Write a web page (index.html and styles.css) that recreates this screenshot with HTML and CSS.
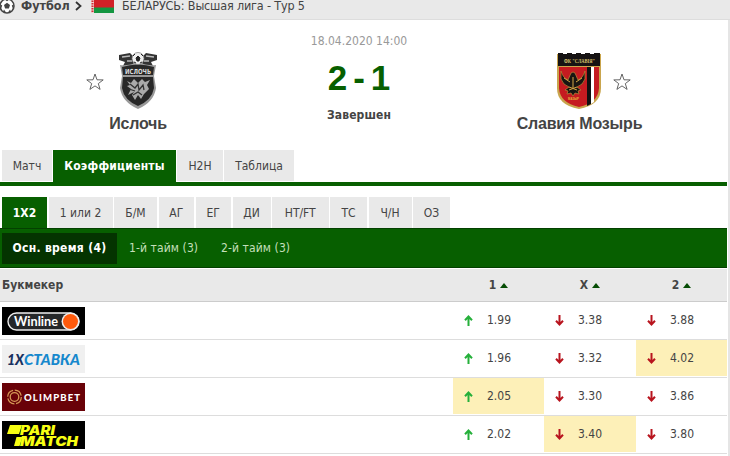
FILE: index.html
```
<!DOCTYPE html>
<html lang="ru">
<head>
<meta charset="utf-8">
<title>Ислочь - Славия Мозырь</title>
<link rel="stylesheet" href="styles.css">
</head>
<body>
<svg width="0" height="0" class="defs" aria-hidden="true">
  <symbol id="up" viewBox="0 0 9 11"><path d="M4.5 11V2M1 5.2 4.5 1.5 8 5.2" fill="none" stroke="#25b03a" stroke-width="2"/></symbol>
  <symbol id="down" viewBox="0 0 9 11"><path d="M4.5 0V9M1 5.8 4.5 9.5 8 5.8" fill="none" stroke="#b8141e" stroke-width="2"/></symbol>
  <symbol id="star" viewBox="0 0 18 17"><path d="M9 1 11 6.8 17.2 6.9 12.3 10.6 14.1 16.4 9 12.9 3.9 16.4 5.7 10.6.8 6.9 7 6.8Z" fill="#fff" stroke="#555" stroke-width=".9"/></symbol>
</svg>
<div class="page">
  <header class="crumbs">
    <svg class="ball" width="16" height="16" viewBox="0 0 16 16"><circle cx="8" cy="8" r="7" fill="#fff" stroke="#444" stroke-width="1.5"/><path d="M8 4.8 11 7 9.9 10.5H6.1L5 7ZM5.5 1.5h5L8 3.2ZM1 6l2.2 1.6L2 11ZM15 6l-2.2 1.6L14 11ZM4 13.8l1-2.3 2 2.9ZM12 13.8l-1-2.3-2 2.9Z" fill="#444"/></svg>
    <b class="sport">Футбол</b>
    <svg class="chev" width="7" height="10" viewBox="0 0 7 10"><path d="M1 1 5.5 5 1 9" fill="none" stroke="#333" stroke-width="1.8"/></svg>
    <svg class="flag" width="23" height="15" viewBox="0 0 23 15"><path fill="#d22027" d="M0 0h23v15H0z"/><path fill="#149641" d="M3 9.5h20V15H3z"/><path fill="#f0d0d0" d="M0 0h3v15H0z"/><path d="M1.5 0v15" stroke="#cf3038" stroke-width="2" stroke-dasharray="1.5 1"/></svg>
    <span class="league">БЕЛАРУСЬ: Высшая лига - Тур 5</span>
  </header>

  <section class="match">
    <div class="team home">
      <div class="badge-row">
        <svg class="star" width="18" height="17"><use href="#star"/></svg>
        <svg width="40" height="58" viewBox="0 0 40 58">
          <path d="M1 3 12 1l5 5-2 8H5L7 10 1 8ZM39 3 28 1l-5 5 2 8h10l-2-4 6-2Z" fill="#333"/>
          <path d="M4 5l8-1M28 4l8 1M9 9h5M26 9h5" stroke="#bbb" stroke-width="1.4"/>
          <path d="M2 13Q10 14 20 10 30 14 38 13L36 24 38 36Q36 50 20 57 4 50 2 36L4 24Z" fill="#999"/>
          <path d="M4 15Q20 10 36 15L35 23H5ZM5 25H35L36 36Q34 48 20 54 6 48 4 36Z" fill="#282828"/>
          <circle cx="20" cy="6.5" r="6" fill="#eee" stroke="#777" stroke-width=".7"/>
          <path d="M20 4l2 2-1 3h-2l-1-3ZM15 4l2-2M25 4l-2-2M16 10l2 1M24 10l-2 1" fill="#222" stroke="#222" stroke-width="1"/>
          <text x="7" y="21.5" class="crest-name" textLength="26" lengthAdjust="spacingAndGlyphs">ИСЛОЧЬ</text>
          <path d="M9 29l4 2 3-4 4 4 4-4 3 3 5-2-3 5 2 4-5 5-3 5-3-4-3 5-3-5 2-3-6 3 3-6-4-3 3-1Z" fill="#aaa"/>
          <path d="M12 32l5 4 3-4 1 6 4-5 1 5M15 43l5-3 4 3M11 37l6 2" fill="none" stroke="#333" stroke-width="1.3"/>
        </svg>
      </div>
      <div class="name">Ислочь</div>
    </div>
    <div class="result">
      <div class="date">18.04.2020 14:00</div>
      <div class="score"><span>2</span><span class="dash">-</span><span>1</span></div>
      <div class="status">Завершен</div>
    </div>
    <div class="team away">
      <div class="badge-row">
        <svg width="46" height="58" viewBox="0 0 46 58">
          <path d="M1 2H45V36Q45 53 23 57 1 53 1 36Z" fill="#c9a54d"/>
          <path d="M2 3V1h5v1h4V1h5v1h4V1h5v1h4V1h5v1h4V1h6V14H2Z" fill="#161313"/><path d="M3 15H43V36Q42 51 23 55 4 51 3 36Z" fill="#c51b20"/>
          <path d="M31 15h4v37l-4 2Z" fill="#111"/><path d="M35 15h3v35l-3 2Z" fill="#fff"/>
          <text x="8" y="11" class="slavia-name" textLength="31" lengthAdjust="spacingAndGlyphs">ФК "СЛАВІЯ"</text>
          <path d="M5 19q2 7 7 9l3-7 2-1 2 1 3 7q5-2 7-9v8q-2 6-8 8l4 3-3 1 1 3-4-1-2 3-2-3-4 1 1-3-3-1 4-3q-6-2-8-8Z" fill="#181512" stroke="#bc8b38" stroke-width=".7"/>
          <path d="M8 26l6 4M26 26l-6 4M17 25v11M13 35l8 3M21 35l-8 3" stroke="#d4a745"/>
          <text x="12" y="48" class="slavia-city" textLength="11" lengthAdjust="spacingAndGlyphs">МАЗЫР</text>
        </svg>
        <svg class="star" width="18" height="17"><use href="#star"/></svg>
      </div>
      <div class="name">Славия Мозырь</div>
    </div>
  </section>

  <nav class="tabs main">
    <a class="t-match">Матч</a><a class="t-odds on">Коэффициенты</a><a class="t-h2h">H2H</a><a class="t-table">Таблица</a>
  </nav>
  <nav class="tabs markets">
    <a class="on">1X2</a><a>1 или 2</a><a>Б/М</a><a>АГ</a><a>ЕГ</a><a>ДИ</a><a>HT/FT</a><a>ТС</a><a>Ч/Н</a><a>ОЗ</a>
  </nav>
  <nav class="periods"><a class="on">Осн. время (4)</a><a class="p1">1-й тайм (3)</a><a class="p2">2-й тайм (3)</a></nav>

  <section class="odds">
    <div class="row head"><span class="bk">Букмекер</span><span class="col">1<i></i></span><span class="col">X<i></i></span><span class="col">2<i></i></span></div>
    <div class="row">
      <svg class="logo" width="83" height="28" viewBox="0 0 83 28"><path d="M0 0h83v28H0z"/><rect x="6" y="6" width="71" height="17" rx="8.5" fill="#252729" stroke="#eee" stroke-width="1.4"/><text x="12" y="18.5" class="winline" textLength="44" lengthAdjust="spacingAndGlyphs">Winline</text><circle cx="68.500" cy="14.500" r="9" fill="#eee"/><circle cx="68.500" cy="14.500" r="7.500" fill="#ff5a0c"/></svg>
      <span class="odd"><svg><use href="#up"/></svg>1.99</span><span class="odd"><svg><use href="#down"/></svg>3.38</span><span class="odd"><svg><use href="#down"/></svg>3.88</span>
    </div>
    <div class="row">
      <svg class="logo" width="83" height="28" viewBox="0 0 83 28"><path fill="#f0f0f0" d="M0 0h83v28H0z"/><text x="5" y="19.500" class="xbet navy" textLength="17" lengthAdjust="spacingAndGlyphs">1X</text><text x="22" y="19.500" class="xbet" textLength="56" lengthAdjust="spacingAndGlyphs">СТАВКА</text></svg>
      <span class="odd"><svg><use href="#up"/></svg>1.96</span><span class="odd"><svg><use href="#down"/></svg>3.32</span><span class="odd best"><svg><use href="#down"/></svg>4.02</span>
    </div>
    <div class="row">
      <svg class="logo" width="83" height="28" viewBox="0 0 83 28"><path fill="#690208" d="M0 0h83v28H0z"/><g fill="none" stroke="#d59855"><circle cx="12.500" cy="14" r="6.800" stroke-width="1.200" stroke-dasharray="9 1.700"/><circle cx="12.500" cy="14" r="4.300" stroke-width="1.300"/></g><text x="22" y="17.800" class="olimp" textLength="56" lengthAdjust="spacing">OLIMPBET</text></svg>
      <span class="odd best"><svg><use href="#up"/></svg>2.05</span><span class="odd"><svg><use href="#down"/></svg>3.30</span><span class="odd"><svg><use href="#down"/></svg>3.86</span>
    </div>
    <div class="row">
      <svg class="logo" width="83" height="28" viewBox="0 0 83 28"><path d="M0 0h83v28H0z"/><path d="M8 4h12l-3 9H5ZM14.500 16h6l-3 9H12Z" fill="#f8ff13"/><text x="18" y="13.500" class="pari" textLength="35" lengthAdjust="spacingAndGlyphs">PARI</text><text x="18" y="25" class="pari" textLength="58" lengthAdjust="spacingAndGlyphs">MATCH</text></svg>
      <span class="odd"><svg><use href="#up"/></svg>2.02</span><span class="odd best"><svg><use href="#down"/></svg>3.40</span><span class="odd"><svg><use href="#down"/></svg>3.80</span>
    </div>
  </section>
</div>
</body>
</html>
```
FILE: styles.css
```
* { box-sizing: border-box; }
body {
  margin: 0;
  height: 456px;
  overflow: hidden;
  background: #fff;
  color: #444;
  font: 12px/16px "DejaVu Sans Condensed", "DejaVu Sans", sans-serif;
  font-stretch: condensed;
}
.defs { display: none; }
svg { display: block; flex: none; }
.page { width: 730px; height: 456px; border-right: 2px solid #e5e5e5; padding-right: 1px; }
.crumbs { display: flex; width: 730px; height: 20px; background: #e9e9e9; border-bottom: 1px solid #ddd; line-height: 12px; }
.ball { margin: -2px 6px 0 -1px; }
.sport { width: 52px; font-size: 12.5px; }
.chev { margin: 1px 9px 0 2px; }
.flag { margin: -2px 8px 0 0; }
.league { font-size: 12.5px; letter-spacing: -.17px; white-space: nowrap; }

.match { display: flex; justify-content: space-between; height: 130px; }
.team { display: flex; flex-direction: column; padding-top: 32px; }
.home { width: 274px; align-items: center; }
.away { width: 295px; align-items: center; }
.badge-row { display: flex; align-items: center; height: 58px; }
.home .badge-row { gap: 14px; margin-right: 30px; }
.away .badge-row { gap: 11px; margin-left: 27px; }
.name { margin-top: 4px; font: bold 16px/20px "Liberation Sans", sans-serif; letter-spacing: -.2px; white-space: nowrap; }
.home .name { margin-left: 2px; }
.result { width: 158px; text-align: center; padding: 13px 0 0 12px; }
.date { color: #999; }
.score { display: flex; justify-content: center; gap: 6px; margin-top: 9px; color: #075f00; font: bold 35px/40px "Liberation Sans", sans-serif; }
.status { margin-top: 9px; font-weight: bold; letter-spacing: .1px; }
.crest-name { font: bold 7px "DejaVu Sans", sans-serif; fill: #ddd; }
.slavia-name { font: bold 6px "Liberation Serif", serif; fill: #d9c16c; }
.slavia-city { font: bold 4px "Liberation Sans", sans-serif; fill: #e6b23c; }

.tabs { display: flex; padding-left: 2px; gap: 1.5px; white-space: nowrap; }
.tabs a { display: flex; align-items: center; justify-content: center; height: 31px; background: #e9e9e9; }
.tabs .on { background: #075f00; color: #fff; font-weight: bold; }
.main { height: 36px; border-bottom: 4px solid #075f00; gap: 1px; }
.main .t-match { width: 50px; }
.main .t-odds { width: 123px; height: 32px; letter-spacing: .22px; }
.main .t-h2h { width: 46px; }
.main .t-table { width: 70px; }
.markets { margin-top: 11px; display: grid; grid-template-columns: 45px 64px 43px 35.5px 35.5px 38px 56.5px 37px 43px 37px; }
.periods { display: flex; height: 40px; padding: 4px 0 0 2px; background: #075f00; border: solid #034000; border-width: 1px 0; color: #c4dfba; letter-spacing: .1px; white-space: nowrap; }
.periods a { height: 31px; line-height: 31px; }
.periods .on { width: 115px; text-align: center; background: #043400; color: #fff; font-weight: bold; letter-spacing: .3px; }
.p1 { margin-left: 12px; width: 92px; }

.odds { margin-top: 1px; }
.row { display: grid; grid-template-columns: 451px 91px 92px 91px; height: 38px; padding-left: 2px; border-bottom: 1px solid #ddd; }
.row.head { height: 33px; background: #e9e9e9; border-bottom-color: #ccc; font-weight: bold; line-height: 33px; }
.logo { margin-top: 5px; }
.col { display: flex; align-items: center; justify-content: center; gap: 4px; }
.col i { border: solid transparent; border-width: 0 4.5px 5px; border-bottom-color: #064d05; }
.odd { display: flex; align-items: center; gap: 14px; height: 36px; padding-left: 11px; }
.odd svg { width: 9px; height: 11px; }
.best { background: #fdf0b8; }
.winline { font: bold 13px Lato, sans-serif; fill: #fff; }
.xbet { font: italic 900 15px Lato, sans-serif; fill: #1688cd; }
.xbet.navy { fill: #18315f; }
.olimp { font: 900 9.5px Lato, sans-serif; fill: #fff; }
.pari { font: italic 900 12.5px Inter, sans-serif; fill: #f8ff13; }
```
